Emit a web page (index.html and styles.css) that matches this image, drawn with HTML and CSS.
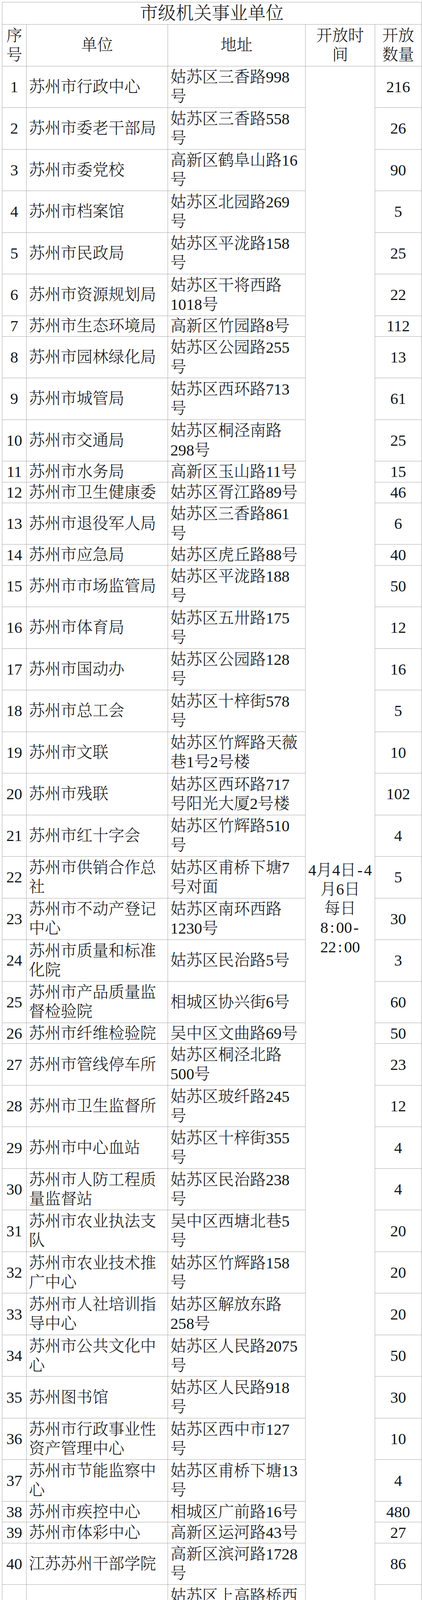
FILE: index.html
```html
<!DOCTYPE html>
<html lang="zh-CN">
<head>
<meta charset="utf-8">
<title>市级机关事业单位</title>
<link rel="stylesheet" href="styles.css">
</head>
<body>
<table class="sheet">
<colgroup>
<col class="c-no"><col class="c-unit"><col class="c-addr"><col class="c-time"><col class="c-qty">
</colgroup>
<thead>
<tr class="title-row"><th colspan="5" class="title">市级机关事业单位</th></tr>
<tr class="l2">
<th class="no">序<br>号</th>
<th class="ctr">单位</th>
<th class="ctr">地址</th>
<th class="ctr">开放时<br>间</th>
<th class="ctr">开放<br>数量</th>
</tr>
</thead>
<tbody>
<tr class="l2"><td class="no">1</td><td>苏州市行政中心</td><td>姑苏区三香路998<br>号</td>
<td class="time" rowspan="44">4月4日<span class="hw">-</span>4<br>月6日<br>每日<br>8<span class="hw">:</span>00<span class="hw">-</span><br>22<span class="hw">:</span>00</td>
<td class="qty">216</td></tr>
<tr class="l2"><td class="no">2</td><td>苏州市委老干部局</td><td>姑苏区三香路558<br>号</td><td class="qty">26</td></tr>
<tr class="l2"><td class="no">3</td><td>苏州市委党校</td><td>高新区鹤阜山路16<br>号</td><td class="qty">90</td></tr>
<tr class="l2 dk"><td class="no">4</td><td>苏州市档案馆</td><td>姑苏区北园路269<br>号</td><td class="qty">5</td></tr>
<tr class="l2"><td class="no">5</td><td>苏州市民政局</td><td>姑苏区平泷路158<br>号</td><td class="qty">25</td></tr>
<tr class="l2"><td class="no">6</td><td>苏州市资源规划局</td><td>姑苏区干将西路<br>1018号</td><td class="qty">22</td></tr>
<tr class="l1"><td class="no">7</td><td>苏州市生态环境局</td><td>高新区竹园路8号</td><td class="qty">112</td></tr>
<tr class="l2 dk"><td class="no">8</td><td>苏州市园林绿化局</td><td>姑苏区公园路255<br>号</td><td class="qty">13</td></tr>
<tr class="l2"><td class="no">9</td><td>苏州市城管局</td><td>姑苏区西环路713<br>号</td><td class="qty">61</td></tr>
<tr class="l2"><td class="no">10</td><td>苏州市交通局</td><td>姑苏区桐泾南路<br>298号</td><td class="qty">25</td></tr>
<tr class="l1"><td class="no">11</td><td>苏州市水务局</td><td>高新区玉山路11号</td><td class="qty">15</td></tr>
<tr class="l1"><td class="no">12</td><td>苏州市卫生健康委</td><td>姑苏区胥江路89号</td><td class="qty">46</td></tr>
<tr class="l2"><td class="no">13</td><td>苏州市退役军人局</td><td>姑苏区三香路861<br>号</td><td class="qty">6</td></tr>
<tr class="l1"><td class="no">14</td><td>苏州市应急局</td><td>姑苏区虎丘路88号</td><td class="qty">40</td></tr>
<tr class="l2"><td class="no">15</td><td>苏州市市场监管局</td><td>姑苏区平泷路188<br>号</td><td class="qty">50</td></tr>
<tr class="l2"><td class="no">16</td><td>苏州市体育局</td><td>姑苏区五卅路175<br>号</td><td class="qty">12</td></tr>
<tr class="l2"><td class="no">17</td><td>苏州市国动办</td><td>姑苏区公园路128<br>号</td><td class="qty">16</td></tr>
<tr class="l2"><td class="no">18</td><td>苏州市总工会</td><td>姑苏区十梓街578<br>号</td><td class="qty">5</td></tr>
<tr class="l2"><td class="no">19</td><td>苏州市文联</td><td>姑苏区竹辉路天薇<br>巷1号2号楼</td><td class="qty">10</td></tr>
<tr class="l2"><td class="no">20</td><td>苏州市残联</td><td>姑苏区西环路717<br>号阳光大厦2号楼</td><td class="qty">102</td></tr>
<tr class="l2"><td class="no">21</td><td>苏州市红十字会</td><td>姑苏区竹辉路510<br>号</td><td class="qty">4</td></tr>
<tr class="l2"><td class="no">22</td><td>苏州市供销合作总<br>社</td><td>姑苏区甫桥下塘7<br>号对面</td><td class="qty">5</td></tr>
<tr class="l2"><td class="no">23</td><td>苏州市不动产登记<br>中心</td><td>姑苏区南环西路<br>1230号</td><td class="qty">30</td></tr>
<tr class="l2"><td class="no">24</td><td>苏州市质量和标准<br>化院</td><td>姑苏区民治路5号</td><td class="qty">3</td></tr>
<tr class="l2"><td class="no">25</td><td>苏州市产品质量监<br>督检验院</td><td>相城区协兴街6号</td><td class="qty">60</td></tr>
<tr class="l1"><td class="no">26</td><td>苏州市纤维检验院</td><td>吴中区文曲路69号</td><td class="qty">50</td></tr>
<tr class="l2"><td class="no">27</td><td>苏州市管线停车所</td><td>姑苏区桐泾北路<br>500号</td><td class="qty">23</td></tr>
<tr class="l2"><td class="no">28</td><td>苏州市卫生监督所</td><td>姑苏区玻纤路245<br>号</td><td class="qty">12</td></tr>
<tr class="l2"><td class="no">29</td><td>苏州市中心血站</td><td>姑苏区十梓街355<br>号</td><td class="qty">4</td></tr>
<tr class="l2"><td class="no">30</td><td>苏州市人防工程质<br>量监督站</td><td>姑苏区民治路238<br>号</td><td class="qty">4</td></tr>
<tr class="l2"><td class="no">31</td><td>苏州市农业执法支<br>队</td><td>吴中区西塘北巷5<br>号</td><td class="qty">20</td></tr>
<tr class="l2"><td class="no">32</td><td>苏州市农业技术推<br>广中心</td><td>姑苏区竹辉路158<br>号</td><td class="qty">20</td></tr>
<tr class="l2"><td class="no">33</td><td>苏州市人社培训指<br>导中心</td><td>姑苏区解放东路<br>258号</td><td class="qty">20</td></tr>
<tr class="l2"><td class="no">34</td><td>苏州市公共文化中<br>心</td><td>姑苏区人民路2075<br>号</td><td class="qty">50</td></tr>
<tr class="l2"><td class="no">35</td><td>苏州图书馆</td><td>姑苏区人民路918<br>号</td><td class="qty">30</td></tr>
<tr class="l2"><td class="no">36</td><td>苏州市行政事业性<br>资产管理中心</td><td>姑苏区西中市127<br>号</td><td class="qty">10</td></tr>
<tr class="l2"><td class="no">37</td><td>苏州市节能监察中<br>心</td><td>姑苏区甫桥下塘13<br>号</td><td class="qty">4</td></tr>
<tr class="l1"><td class="no">38</td><td>苏州市疾控中心</td><td>相城区广前路16号</td><td class="qty">480</td></tr>
<tr class="l1"><td class="no">39</td><td>苏州市体彩中心</td><td>高新区运河路43号</td><td class="qty">27</td></tr>
<tr class="l2"><td class="no">40</td><td>江苏苏州干部学院</td><td>高新区滨河路1728<br>号</td><td class="qty">86</td></tr>
<tr class="l2"><td class="no">41</td><td rowspan="2" class="merged">苏州市交通运输执<br>法支队</td><td>姑苏区上高路桥西<br>堍</td><td class="qty">30</td></tr>
<tr class="l2 dk"><td class="no">42</td><td>吴中区太湖西路47<br>号</td><td class="qty">30</td></tr>
<tr class="l2"><td class="no">43</td><td>苏州市供排水管理<br>处</td><td>苏州市桐泾南路<br>908号</td><td class="qty">10</td></tr>
<tr class="l2"><td class="no">44</td><td>苏州旅游与财经高<br>等职业技术学校</td><td>姑苏区留园路88号</td><td class="qty">35</td></tr>
<tr class="l3"><td class="no">45</td><td>苏州市青少年活动<br>中心</td><td>姑苏区南门路8号</td>
<td class="time">4月4日<br>8<span class="hw">:</span>00<span class="hw">-</span><br>22<span class="hw">:</span>00</td><td class="qty">66</td></tr>
<tr class="l2 total"><td class="no">合<br>计</td><td></td><td></td><td></td><td class="qty">2007</td></tr>
</tbody>
</table>
</body>
</html>
```

FILE: styles.css
```css
html, body {
  background: #ffffff;
}
body {
  margin: 5px 0 0 5px;
}
.sheet {
  border-collapse: collapse;
  table-layout: fixed;
  width: 1073px;
  font-family: "Liberation Serif", "Noto Serif CJK SC", "Noto Sans CJK SC", serif;
  font-size: 40.7px;
  line-height: 49.2px;
  font-weight: 300;
  color: #151515;
}
.c-no { width: 62px; }
.c-unit { width: 362px; }
.c-addr { width: 352px; }
.c-time { width: 178px; }
.c-qty { width: 119px; }

.sheet tr.title-row { height: 57px; }
.sheet tr.l1 { height: 53.3px; }
.sheet tr.l2 { height: 106.5px; }
.sheet tr.l3 { height: 159.8px; }

.sheet th,
.sheet td {
  border: 1px solid #a9a9a9;
  padding: 0 6px;
  vertical-align: middle;
  text-align: left;
  white-space: nowrap;
  font-weight: 300;
  overflow: hidden;
}
.sheet .title {
  font-size: 46px;
  line-height: 50px;
  text-align: center;
  padding: 0;
}
.sheet .ctr,
.sheet .time,
.sheet .qty,
.sheet .no {
  text-align: center;
}
.sheet .no {
  padding: 0;
}
.sheet .time {
  padding: 0 4px;
}
.hw {
  display: inline-block;
  width: 0.5em;
  text-align: center;
  line-height: 1;
}
.sheet tr.dk > td {
  border-top-color: #3a3a3a;
}
.sheet tr.total > td {
  border-bottom: 3px solid #111111;
}
```
